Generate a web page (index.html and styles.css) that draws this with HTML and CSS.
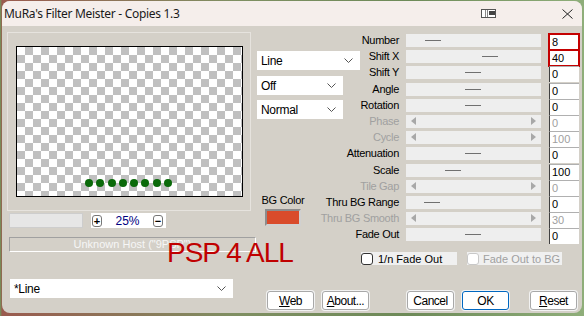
FILE: index.html
```html
<!DOCTYPE html>
<html lang="en">
<head>
    <meta charset="UTF-8">
    <title>MuRa's Filter Meister - Copies 1.3</title>
    <link rel="stylesheet" href="styles.css">
</head>
<body>
    <div class="window">
        <!-- 타이틀 바 -->
        <div class="titlebar">
            <span class="title">MuRa's Filter Meister - Copies 1.3</span>
            <svg class="tb-panel" width="15" height="9" viewBox="0 0 15 9">
                <rect x="0.5" y="0.5" width="14" height="8" fill="#fff" stroke="#555"/>
                <line x1="4.5" y1="1" x2="4.5" y2="8" stroke="#888"/>
                <line x1="6.5" y1="1" x2="6.5" y2="8" stroke="#888"/>
                <rect x="8" y="2" width="6" height="4" fill="#444"/>
            </svg>
            <svg class="tb-close" width="11" height="10" viewBox="0 0 11 10">
                <path d="M0.5 0.5 L10.5 9.5 M10.5 0.5 L0.5 9.5" stroke="#222" stroke-width="1"/>
            </svg>
        </div>

        <div class="body">
            <!-- 왼쪽: 미리보기 -->
            <div class="left">
                <div class="preview-frame">
                    <div class="preview">
                        <span class="dot"></span><span class="dot"></span><span class="dot"></span><span class="dot"></span>
                        <span class="dot"></span><span class="dot"></span><span class="dot"></span><span class="dot"></span>
                    </div>
                </div>
                <div class="zoom-row">
                    <div class="zoom-bar"></div>
                    <div class="zoom-box">
                        <span class="zoom-btn">+</span>
                        <span class="zoom-value">25%</span>
                        <span class="zoom-btn">&minus;</span>
                    </div>
                </div>
                <div class="status">Unknown Host ("9PSP")</div>
                <div class="select select-preset">
                    <span>*Line</span>
                    <svg width="9" height="5" viewBox="0 0 9 5"><path d="M0.5 0.5 L4.5 4.5 L8.5 0.5" fill="none" stroke="#555"/></svg>
                </div>
            </div>

            <!-- 오른쪽: 컨트롤 -->
            <div class="right">
                <div class="upper">
                    <div class="mid">
                        <div class="select select-line">
                            <span>Line</span>
                            <svg width="9" height="5" viewBox="0 0 9 5"><path d="M0.5 0.5 L4.5 4.5 L8.5 0.5" fill="none" stroke="#555"/></svg>
                        </div>
                        <div class="select select-small select-off">
                            <span>Off</span>
                            <svg width="9" height="5" viewBox="0 0 9 5"><path d="M0.5 0.5 L4.5 4.5 L8.5 0.5" fill="none" stroke="#555"/></svg>
                        </div>
                        <div class="select select-small select-normal">
                            <span>Normal</span>
                            <svg width="9" height="5" viewBox="0 0 9 5"><path d="M0.5 0.5 L4.5 4.5 L8.5 0.5" fill="none" stroke="#555"/></svg>
                        </div>
                        <div class="bg-color">
                            <span class="bg-label">BG Color</span>
                            <span class="swatch"></span>
                        </div>
                    </div>

                    <div class="params">
                        <span class="label">Number</span>
                        <span class="slider"><span class="thumb" style="left: 19px"></span></span>
                        <span class="value marked">8</span>

                        <span class="label">Shift X</span>
                        <span class="slider"><span class="thumb" style="left: 76px"></span></span>
                        <span class="value marked">40</span>

                        <span class="label">Shift Y</span>
                        <span class="slider"><span class="thumb" style="left: 59px"></span></span>
                        <span class="value">0</span>

                        <span class="label">Angle</span>
                        <span class="slider"><span class="thumb" style="left: 59px"></span></span>
                        <span class="value">0</span>

                        <span class="label">Rotation</span>
                        <span class="slider"><span class="thumb" style="left: 59px"></span></span>
                        <span class="value">0</span>

                        <span class="label dim">Phase</span>
                        <span class="slider off"></span>
                        <span class="value dim">0</span>

                        <span class="label dim">Cycle</span>
                        <span class="slider off"></span>
                        <span class="value dim">100</span>

                        <span class="label">Attenuation</span>
                        <span class="slider"><span class="thumb" style="left: 59px"></span></span>
                        <span class="value">0</span>

                        <span class="label">Scale</span>
                        <span class="slider"><span class="thumb" style="left: 39px"></span></span>
                        <span class="value">100</span>

                        <span class="label dim">Tile Gap</span>
                        <span class="slider off"></span>
                        <span class="value dim">0</span>

                        <span class="label">Thru BG Range</span>
                        <span class="slider"><span class="thumb" style="left: 18px"></span></span>
                        <span class="value">0</span>

                        <span class="label dim">Thru BG Smooth</span>
                        <span class="slider off"></span>
                        <span class="value dim">30</span>

                        <span class="label">Fade Out</span>
                        <span class="slider"><span class="thumb" style="left: 59px"></span></span>
                        <span class="value">0</span>
                    </div>
                </div>

                <div class="checks">
                    <label class="check check-fade"><span class="box"></span>1/n Fade Out</label>
                    <label class="check check-bg dim"><span class="box"></span>Fade Out to BG</label>
                </div>

                <div class="buttons">
                    <button class="btn"><u>W</u>eb</button>
                    <button class="btn btn-about"><u>A</u>bout...</button>
                    <button class="btn btn-cancel">Cancel</button>
                    <button class="btn btn-ok">OK</button>
                    <button class="btn btn-reset"><u>R</u>eset</button>
                </div>
            </div>
        </div>

        <!-- 워터마크 -->
        <div class="watermark">PSP 4 ALL</div>
    </div>
</body>
</html>
```

FILE: styles.css
```css
* {
    box-sizing: border-box;
}

body {
    margin: 0;
    width: 584px;
    height: 316px;
    overflow: hidden;
    background: linear-gradient(90deg, #6f9a5c 0, #9a5a4e 2px, #7f8f62 40%, #6d8a58 70%, #8fae7a 100%);
    font-family: "Liberation Sans", Arial, sans-serif;
    color: #000;
}

/* 창 */
.window {
    position: relative;
    margin: 1px 0 0 2px;
    width: 580px;
    height: 312px;
    border-radius: 8px;
    overflow: hidden;
    background-color: #d4d0c8;
    display: flex;
    flex-direction: column;
}

.titlebar {
    height: 25px;
    flex-shrink: 0;
    background-color: #f5eeeb;
    display: flex;
    align-items: center;
    padding-left: 2px;
    font-family: "Noto Sans", sans-serif;
    font-size: 12px;
    letter-spacing: -0.3px;
    color: #1a1a1a;
}

.title {
    flex: 1;
    padding-bottom: 1px;
}

.tb-panel {
    margin-right: 66px;
}

.tb-close {
    margin-right: 9px;
}

.body {
    flex: 1;
    display: flex;
}

/* 왼쪽 영역 */
.left {
    width: 255px;
    display: flex;
    flex-direction: column;
    align-items: flex-start;
}

.preview-frame {
    margin: 6px 0 0 5px;
    width: 244px;
    height: 179px;
    border: 1px solid #e6e3de;
    padding: 13px 0 0 8px;
}

.preview {
    width: 227px;
    height: 151px;
    border: 1px solid #000;
    background-color: #fff;
    background-image: conic-gradient(#c0c0c0 25%, #fff 0 50%, #c0c0c0 0 75%, #fff 0);
    background-size: 16px 16px;
    display: flex;
    align-items: flex-end;
    gap: 3.3px;
    padding: 0 0 9px 68px;
}

.dot {
    width: 8px;
    height: 8px;
    border-radius: 50%;
    background-color: #0a6a0a;
}

.zoom-row {
    margin: 2px 0 0 7px;
    display: flex;
    gap: 8px;
    height: 15px;
}

.zoom-bar {
    width: 74px;
    background-color: #e6e6e6;
    border: 1px solid #cdcdcd;
}

.zoom-box {
    width: 75px;
    background-color: #fff;
    display: flex;
    align-items: center;
    justify-content: space-between;
    padding: 0 3px 0 1px;
}

.zoom-btn {
    width: 10px;
    height: 12px;
    border: 1px solid #777;
    border-radius: 3px;
    font-size: 11px;
    font-weight: bold;
    line-height: 10px;
    text-align: center;
}

.zoom-value {
    font-size: 12px;
    color: #000080;
}

.status {
    margin: 9px 0 0 7px;
    width: 247px;
    height: 15px;
    border-top: 1px solid #a0a0a0;
    border-left: 1px solid #a0a0a0;
    border-bottom: 1px solid #fff;
    border-right: 1px solid #fff;
    color: #f6f6f6;
    font-size: 11px;
    line-height: 13px;
    text-align: center;
}

/* 드롭다운 */
.select {
    height: 19px;
    background-color: #fff;
    display: flex;
    align-items: center;
    justify-content: space-between;
    padding: 0 7px 0 4px;
    font-size: 12px;
    letter-spacing: -0.3px;
}

.select-preset {
    margin: 27px 0 0 8px;
    width: 223px;
}

/* 오른쪽 영역 */
.right {
    flex: 1;
    display: flex;
    flex-direction: column;
}

.upper {
    display: flex;
}

.mid {
    width: 103px;
    display: flex;
    flex-direction: column;
    align-items: flex-start;
    padding-top: 25px;
}

.select-line {
    width: 103px;
}

.select-small {
    width: 86px;
}

.select-off {
    margin-top: 6px;
}

.select-normal {
    margin-top: 5px;
}

.bg-color {
    margin: 75px 0 0 3px;
    width: 46px;
    display: flex;
    flex-direction: column;
    align-items: center;
}

.bg-label {
    font-size: 11px;
    line-height: 12px;
    letter-spacing: -0.3px;
    white-space: nowrap;
}

.swatch {
    margin-top: 3px;
    width: 36px;
    height: 17px;
    background-color: #d94b2b;
    border: 2px solid #8c8c8c;
    border-right-color: #d0d0d0;
    border-bottom-color: #d0d0d0;
}

/* 파라미터 그리드 */
.params {
    display: grid;
    grid-template-columns: 46px 143px 30px;
    grid-auto-rows: 16.2px;
    align-items: start;
    padding-top: 8px;
}

.label {
    display: flex;
    justify-content: flex-end;
    padding-right: 7px;
    white-space: nowrap;
    font-size: 11px;
    line-height: 13px;
    letter-spacing: -0.3px;
}

.dim {
    color: #a0a0a0;
}

.slider {
    position: relative;
    width: 135px;
    height: 13px;
    background-color: #eeeeee;
}

.thumb {
    position: absolute;
    top: 6px;
    width: 16px;
    height: 1px;
    background-color: #707070;
}

/* 비활성 슬라이더 화살표 */
.slider.off::before,
.slider.off::after {
    content: "";
    position: absolute;
    top: 2px;
    border-top: 4.5px solid transparent;
    border-bottom: 4.5px solid transparent;
}

.slider.off::before {
    left: 5px;
    border-right: 5px solid #a8a8a8;
}

.slider.off::after {
    right: 5px;
    border-left: 5px solid #a8a8a8;
}

.value {
    width: 30px;
    height: 16px;
    background-color: #fff;
    border-left: 1px solid #404040;
    border-top: 1px solid #b0b0b0;
    padding-left: 2px;
    font-size: 11px;
    line-height: 14px;
}

.value.marked {
    outline: 2px solid #c40000;
    outline-offset: -1px;
    border-color: #fff;
}

/* 체크박스 */
.checks {
    display: flex;
    gap: 10px;
    margin: 8px 0 0 104px;
}

.check {
    display: flex;
    align-items: center;
    gap: 5px;
    height: 13px;
    background-color: #f0f0f0;
    font-size: 11px;
    white-space: nowrap;
}

.check-fade {
    width: 96px;
}

.check-bg {
    width: 95px;
    gap: 4px;
}

.box {
    width: 12px;
    height: 12px;
    border: 1px solid #333;
    border-radius: 3px;
    background-color: #fff;
}

.check.dim .box {
    border-color: #c8c8c8;
}

/* 버튼 */
.buttons {
    display: flex;
    margin: 26px 0 0 10px;
}

.btn {
    width: 47px;
    height: 19px;
    padding: 0;
    background-color: #fff;
    border: 1px solid #a8a8a8;
    border-radius: 3px;
    box-shadow: 0 0 0 1px #f2f2f2;
    font-family: "Liberation Sans", Arial, sans-serif;
    font-size: 12px;
    letter-spacing: -0.5px;
    color: #000;
}

.btn-about {
    margin-left: 8px;
}

.btn-cancel {
    margin-left: 38px;
}

.btn-ok {
    margin-left: 8px;
    border-color: #0067c0;
}

.btn-reset {
    margin-left: 21px;
}

/* 워터마크 */
.watermark {
    position: absolute;
    left: 165px;
    top: 238px;
    font-size: 28px;
    line-height: 28px;
    letter-spacing: -1px;
    color: #c00000;
    white-space: nowrap;
}
```
